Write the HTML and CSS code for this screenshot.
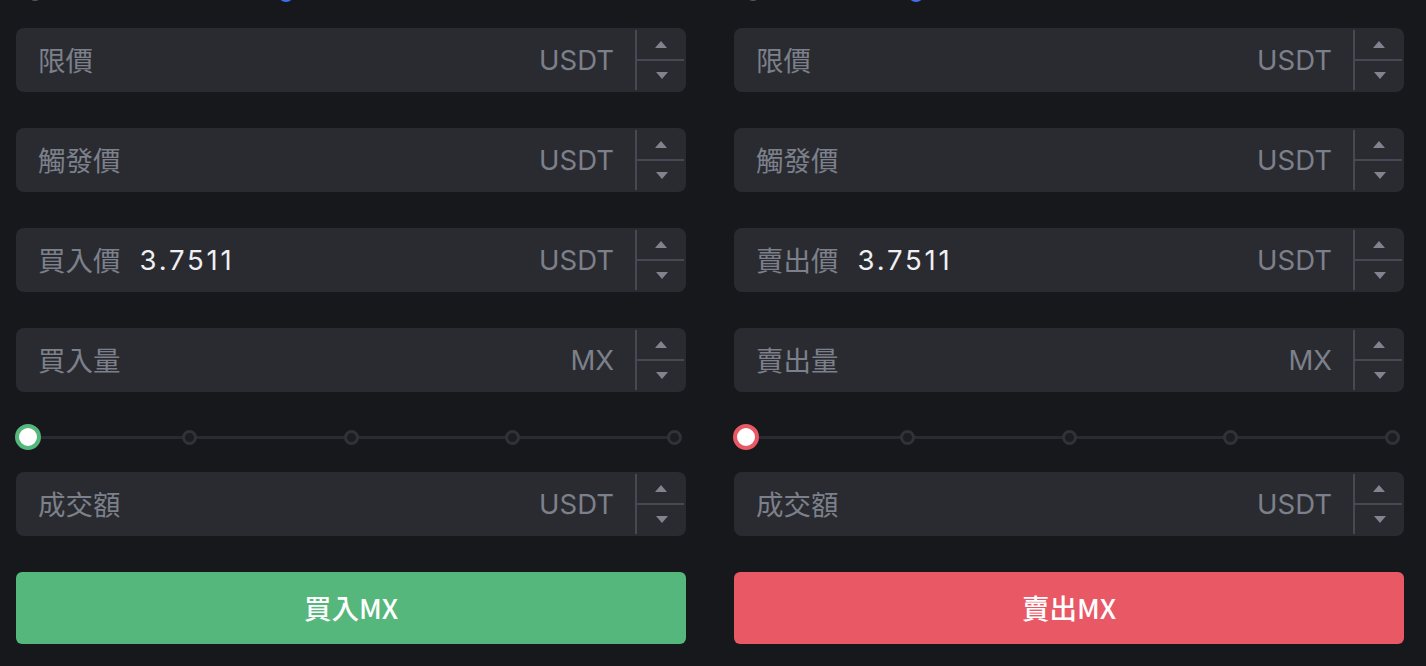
FILE: index.html
```html
<!DOCTYPE html>
<html lang="zh-Hant">
<head>
<meta charset="utf-8">
<title>Stop-limit order</title>
<link rel="stylesheet" href="styles.css">
</head>
<body>
<div class="page">
  <section class="col buy">
    <div class="modes"><span class="m-gray"></span><span class="m-blue"></span></div>
    <div class="field">
      <span class="label">限價</span>
      <span class="unit">USDT</span>
      <div class="stepper"><span class="half up"><i class="tri-up"></i></span><span class="half"><i class="tri-down"></i></span></div>
    </div>
    <div class="field">
      <span class="label">觸發價</span>
      <span class="unit">USDT</span>
      <div class="stepper"><span class="half up"><i class="tri-up"></i></span><span class="half"><i class="tri-down"></i></span></div>
    </div>
    <div class="field">
      <span class="label">買入價</span>
      <span class="value">3.7511</span>
      <span class="unit">USDT</span>
      <div class="stepper"><span class="half up"><i class="tri-up"></i></span><span class="half"><i class="tri-down"></i></span></div>
    </div>
    <div class="field last">
      <span class="label">買入量</span>
      <span class="unit">MX</span>
      <div class="stepper"><span class="half up"><i class="tri-up"></i></span><span class="half"><i class="tri-down"></i></span></div>
    </div>
    <div class="slider">
      <div class="track">
        <span class="stop"><span class="thumb"></span></span>
        <span class="stop"><span class="dot"></span></span>
        <span class="stop"><span class="dot"></span></span>
        <span class="stop"><span class="dot"></span></span>
        <span class="stop"><span class="dot"></span></span>
      </div>
    </div>
    <div class="field">
      <span class="label">成交額</span>
      <span class="unit">USDT</span>
      <div class="stepper"><span class="half up"><i class="tri-up"></i></span><span class="half"><i class="tri-down"></i></span></div>
    </div>
    <button class="action">買入MX</button>
  </section>

  <section class="col sell">
    <div class="modes"><span class="m-gray"></span><span class="m-blue"></span></div>
    <div class="field">
      <span class="label">限價</span>
      <span class="unit">USDT</span>
      <div class="stepper"><span class="half up"><i class="tri-up"></i></span><span class="half"><i class="tri-down"></i></span></div>
    </div>
    <div class="field">
      <span class="label">觸發價</span>
      <span class="unit">USDT</span>
      <div class="stepper"><span class="half up"><i class="tri-up"></i></span><span class="half"><i class="tri-down"></i></span></div>
    </div>
    <div class="field">
      <span class="label">賣出價</span>
      <span class="value">3.7511</span>
      <span class="unit">USDT</span>
      <div class="stepper"><span class="half up"><i class="tri-up"></i></span><span class="half"><i class="tri-down"></i></span></div>
    </div>
    <div class="field last">
      <span class="label">賣出量</span>
      <span class="unit">MX</span>
      <div class="stepper"><span class="half up"><i class="tri-up"></i></span><span class="half"><i class="tri-down"></i></span></div>
    </div>
    <div class="slider">
      <div class="track">
        <span class="stop"><span class="thumb"></span></span>
        <span class="stop"><span class="dot"></span></span>
        <span class="stop"><span class="dot"></span></span>
        <span class="stop"><span class="dot"></span></span>
        <span class="stop"><span class="dot"></span></span>
      </div>
    </div>
    <div class="field">
      <span class="label">成交額</span>
      <span class="unit">USDT</span>
      <div class="stepper"><span class="half up"><i class="tri-up"></i></span><span class="half"><i class="tri-down"></i></span></div>
    </div>
    <button class="action">賣出MX</button>
  </section>
</div>
</body>
</html>
```
FILE: styles.css
```css
html, body {
  margin: 0;
  padding: 0;
  background: #17181c;
  overflow: hidden;
}
body {
  font-family: Inter, "Noto Sans CJK TC", "Noto Sans", sans-serif;
  color: #7c808b;
}
.page {
  display: flex;
  gap: 48px;
  padding: 0 22px 0 16px;
}
.col {
  width: 670px;
  display: flex;
  flex-direction: column;
}
.modes {
  height: 28px;
  display: flex;
  align-items: flex-start;
}
.m-gray {
  width: 14px;
  height: 14px;
  margin-top: -13px;
  margin-left: 12px;
  border-radius: 50%;
  background: #55585f;
}
.m-blue {
  width: 16px;
  height: 16px;
  margin-top: -14px;
  margin-left: 236px;
  border-radius: 50%;
  background: #3d6ff2;
}
.sell .m-blue {
  margin-left: 148px;
}
.field {
  height: 64px;
  background: #2a2b30;
  border-radius: 8px;
  display: flex;
  align-items: center;
  margin-bottom: 36px;
}
.field.last {
  margin-bottom: 0;
}
.label {
  padding-left: 22px;
  padding-bottom: 3px;
  font-family: "Noto Sans CJK TC", sans-serif;
  font-size: 27.5px;
  color: #7c808b;
}
.value {
  margin-left: 19px;
  color: #eef0f3;
  font-size: 27.5px;
  letter-spacing: 2.8px;
}
.unit {
  margin-left: auto;
  padding-right: 21px;
  color: #7c808b;
  font-size: 27.5px;
}
.stepper {
  width: 51px;
  height: 60px;
  box-sizing: border-box;
  border-left: 2px solid #464953;
  display: flex;
  flex-direction: column;
}
.half {
  flex: 1;
  display: flex;
  align-items: center;
  justify-content: center;
}
.half.up {
  border-bottom: 2px solid #464953;
  margin-right: 2px;
}
.tri-up {
  width: 0;
  height: 0;
  border-left: 6.5px solid transparent;
  border-right: 6.5px solid transparent;
  border-bottom: 7px solid #80848f;
}
.tri-down {
  width: 0;
  height: 0;
  border-left: 6.5px solid transparent;
  border-right: 6.5px solid transparent;
  border-top: 7px solid #80848f;
}
.slider {
  height: 80px;
  box-sizing: border-box;
  padding: 32px 12px 0;
}
.track {
  height: 26px;
  display: flex;
  justify-content: space-between;
  align-items: center;
  background: linear-gradient(#2a2b30, #2a2b30) center / 100% 3px no-repeat;
}
.stop {
  width: 0;
  height: 26px;
  display: flex;
  align-items: center;
  justify-content: center;
}
.dot {
  flex: none;
  width: 15px;
  height: 15px;
  box-sizing: border-box;
  border-radius: 50%;
  border: 3px solid #303238;
  background: #1c1d21;
}
.thumb {
  flex: none;
  width: 26px;
  height: 26px;
  box-sizing: border-box;
  border-radius: 50%;
  border: 4px solid #55b77b;
  background: #ffffff;
}
.sell .thumb {
  border-color: #e95865;
}
.action {
  height: 72px;
  border: none;
  border-radius: 6px;
  background: #55b77b;
  color: #ffffff;
  font-family: "Noto Sans CJK TC", Inter, sans-serif;
  font-size: 27.5px;
  font-weight: 500;
  padding: 0 0 2px;
}
.sell .action {
  background: #e95865;
}
```
